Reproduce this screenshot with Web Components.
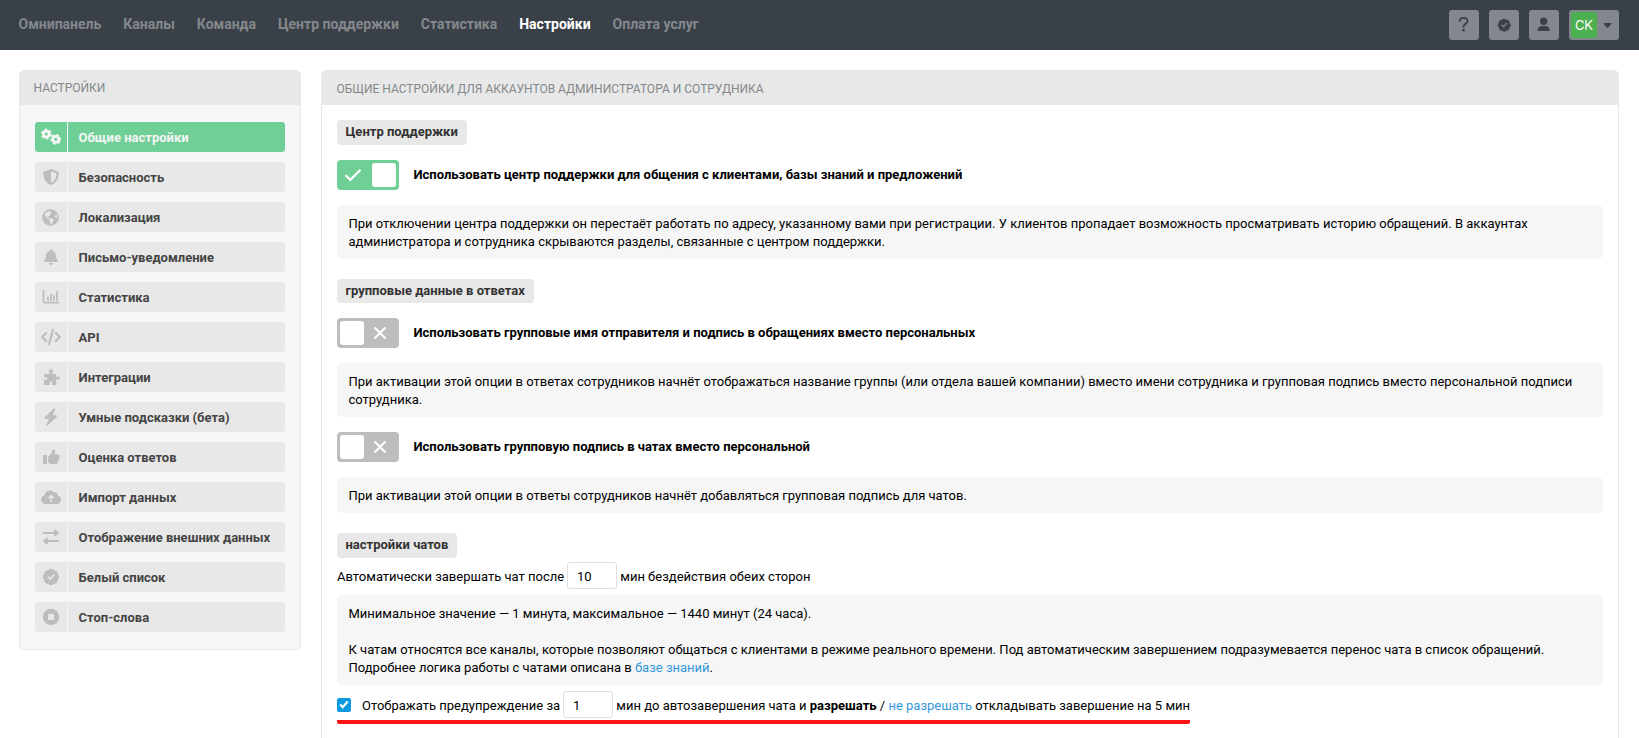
<!DOCTYPE html>
<html lang="ru">
<head>
<meta charset="utf-8">
<title>Настройки</title>
<style>
  body {
    margin: 0;
    height: 738px;
    overflow: hidden;
    background: #fff;
    color: #000;
    font: 13px/18px Roboto, "Liberation Sans", sans-serif;
  }
  main {
    display: grid;
    grid-template-columns: 282px 1298px;
    gap: 20px;
    align-items: start;
    padding: 20px 20px 0 19px;
  }
  .row {
    display: flex;
    align-items: center;
    white-space: pre;
  }
  .row > span { padding-top: 2px; margin-right: -0.3px; }
  .idle { height: 27px; margin: 4px 0 6px; }
  .warn { width: 853px; height: 27px; margin-top: 6px; padding-bottom: 2px; border-bottom: 4px solid #fe1313; border-radius: 0 0 2px 2px; }
  .gap { height: 20px; }
  a { color: #3498db; text-decoration: none; }
</style>
</head>
<body>

<app-header></app-header>

<main>
  <settings-panel class="side" heading="Настройки" tinted>
    <menu-item icon="cogs" active>Общие настройки</menu-item>
    <menu-item icon="shield">Безопасность</menu-item>
    <menu-item icon="globe">Локализация</menu-item>
    <menu-item icon="bell">Письмо-уведомление</menu-item>
    <menu-item icon="chart">Статистика</menu-item>
    <menu-item icon="code">API</menu-item>
    <menu-item icon="puzzle">Интеграции</menu-item>
    <menu-item icon="bolt">Умные подсказки (бета)</menu-item>
    <menu-item icon="thumb">Оценка ответов</menu-item>
    <menu-item icon="cloud">Импорт данных</menu-item>
    <menu-item icon="exchange">Отображение внешних данных</menu-item>
    <menu-item icon="badge">Белый список</menu-item>
    <menu-item icon="stop">Стоп-слова</menu-item>
  </settings-panel>

  <settings-panel heading="Общие настройки для аккаунтов администратора и сотрудника">
    <section-tag>Центр поддержки</section-tag>
    <toggle-row on>Использовать центр поддержки для общения с клиентами, базы знаний и предложений</toggle-row>
    <info-note>При отключении центра поддержки он перестаёт работать по адресу, указанному вами при регистрации. У клиентов пропадает возможность просматривать историю обращений. В аккаунтах администратора и сотрудника скрываются разделы, связанные с центром поддержки.</info-note>

    <div class="gap"></div>
    <section-tag style="height:24px">групповые данные в ответах</section-tag>
    <toggle-row>Использовать групповые имя отправителя и подпись в обращениях вместо персональных</toggle-row>
    <info-note>При активации этой опции в ответах сотрудников начнёт отображаться название группы (или отдела вашей компании) вместо имени сотрудника и групповая подпись вместо персональной подписи сотрудника.</info-note>
    <toggle-row>Использовать групповую подпись в чатах вместо персональной</toggle-row>
    <info-note>При активации этой опции в ответы сотрудников начнёт добавляться групповая подпись для чатов.</info-note>

    <div class="gap"></div>
    <section-tag>настройки чатов</section-tag>
    <div class="row idle"><span>Автоматически завершать чат после </span><number-box value="10"></number-box><span> мин бездействия обеих сторон</span></div>
    <info-note>Минимальное значение — 1 минута, максимальное — 1440 минут (24 часа).<br><br>К чатам относятся все каналы, которые позволяют общаться с клиентами в режиме реального времени. Под автоматическим завершением подразумевается перенос чата в список обращений. Подробнее логика работы с чатами описана в <a href="#">базе знаний</a>.</info-note>
    <div class="row warn"><check-box></check-box><span>Отображать предупреждение за </span><number-box value="1"></number-box><span> мин до автозавершения чата и <b>разрешать</b> / <a href="#">не разрешать</a> откладывать завершение на 5 мин</span></div>
  </settings-panel>
</main>

<script>
const gear = (x, y, turn) => `
  <g transform="translate(${x} ${y}) rotate(${turn})" fill="none" stroke="currentColor">
    <circle r="2.9" stroke-width="2.7"/>
    <circle r="4.5" stroke-width="1.8" stroke-dasharray="2.7 2.012"/>
  </g>`;

const badge = `<path fill-rule="evenodd" d="M9 .8a3 3 0 0 1 2.6 1.5 3 3 0 0 1 3.1.9 3 3 0 0 1 .9 3.1A3 3 0 0 1 17.2 9a3 3 0 0 1-1.6 2.7 3 3 0 0 1-.9 3.1 3 3 0 0 1-3.1.9A3 3 0 0 1 9 17.2a3 3 0 0 1-2.6-1.5 3 3 0 0 1-3.1-.9 3 3 0 0 1-.9-3.1A3 3 0 0 1 .8 9a3 3 0 0 1 1.6-2.7 3 3 0 0 1 .9-3.1 3 3 0 0 1 3.1-.9A3 3 0 0 1 9 .8zM12 5.8l-3.9 4-1.9-1.7-1 1.1 3 2.8 4.9-5.1z"/>`;

// [viewBox, width, height, markup]
const ICONS = {
  cogs: ["0 0 20 18", 20, 18, gear(5.3, 6, 0) + gear(14.8, 11.3, 30)],
  shield: ["0 0 18 18", 18, 18, `<path fill-rule="evenodd" d="M9 1l7 2.7c.5.2.8.7.8 1.2C16.8 10.500 14 15 9 17 4 15 1.200 10.500 1.200 4.900c0-.5.3-1 .8-1.200zM9 3.200v11.500c3.500-1.700 5.500-5.300 5.600-9.300z"/>`],
  globe: ["0 0 496 512", 17, 17, `<path d="M248 8C111.030 8 0 119.030 0 256s111.030 248 248 248 248-111.030 248-248S384.970 8 248 8zm82.290 357.600c-3.900 3.880-7.990 7.950-11.310 11.280-2.990 3-5.100 6.700-6.170 10.710-1.510 5.660-2.730 11.380-4.770 16.870l-17.390 46.850c-13.760 3-28 4.690-42.650 4.690v-27.380c1.690-12.620-7.640-36.260-22.630-51.250-6-6-9.370-14.140-9.370-22.630v-32.010c0-11.640-6.270-22.340-16.460-27.970-14.370-7.950-34.810-19.060-48.810-26.110-11.480-5.780-22.100-13.140-31.650-21.750l-.8-.72a114.792 114.792 0 0 1-18.060-20.740c-9.380-13.770-24.660-36.420-34.590-51.140 20.470-45.500 57.360-82.040 103.200-101.890l24.010 12.010C203.480 89.740 216 82.010 216 70.110v-11.300c7.990-1.290 16.120-2.110 24.390-2.420l28.300 28.300c6.250 6.250 6.250 16.380 0 22.630L264 112l-10.340 10.340c-3.120 3.120-3.120 8.190 0 11.310l4.690 4.690c3.120 3.120 3.120 8.190 0 11.310l-8 8a8.008 8.008 0 0 1-5.660 2.340h-8.990c-2.080 0-4.080.81-5.580 2.270l-9.920 9.650a8.008 8.008 0 0 0-1.580 9.310l15.590 31.190c2.660 5.320-1.210 11.580-7.150 11.580h-5.640c-1.930 0-3.790-.7-5.240-1.960l-9.280-8.060a16.017 16.017 0 0 0-15.550-3.100l-31.170 10.390a11.950 11.950 0 0 0-8.170 11.340c0 4.530 2.560 8.660 6.610 10.690l11.080 5.540c9.410 4.710 19.790 7.160 30.310 7.160s22.590 27.290 32 32h66.750c8.490 0 16.620 3.370 22.630 9.370l13.690 13.690a30.503 30.503 0 0 1 8.930 21.570 46.536 46.536 0 0 1-13.720 32.980zM417 274.250c-5.790-1.450-10.840-5-14.150-9.970l-17.980-26.970a23.970 23.970 0 0 1 0-26.620l19.590-29.380c2.320-3.470 5.500-6.290 9.240-8.150l12.980-6.490C440.200 193.590 448 223.870 448 256c0 8.670-.74 17.160-1.820 25.540L417 274.250z"/>`],
  bell: ["0 0 448 512", 14, 16, `<path d="M224 512c35.320 0 63.970-28.650 63.970-64H160.030c0 35.350 28.650 64 63.970 64zm215.390-149.710c-19.320-20.760-55.470-51.990-55.470-154.290 0-77.700-54.480-139.900-127.940-155.160V32c0-17.670-14.320-32-31.980-32s-31.980 14.330-31.980 32v20.840C118.560 68.100 64.080 130.300 64.080 208c0 102.300-36.150 133.530-55.470 154.290-6 6.450-8.660 14.160-8.610 21.710.11 16.400 12.980 32 32.100 32h383.800c19.120 0 32-15.600 32.100-32 .05-7.550-2.610-15.270-8.610-21.710z"/>`],
  chart: ["0 0 18 16", 18, 16, `<path d="M1.500 1.500v10.700a1.500 1.500 0 0 0 1.500 1.500h13.700M6 8.500v2.700M9 5.500v5.700M12 6.800v4.400M15 3v8.200" fill="none" stroke="currentColor" stroke-width="1.8" stroke-linecap="round"/>`],
  code: ["0 0 20 18", 20, 18, `<path d="M5.200 5L1.200 9l4 4M14.800 5l4 4-4 4M12 1.700L8 16.300" fill="none" stroke="currentColor" stroke-width="2.100" stroke-linecap="round" stroke-linejoin="round"/>`],
  puzzle: ["0 0 18 18", 18, 18, `<path d="M2 6h4.700c.7 0 1-.6.600-1.200C6.300 3 7 1.200 9 1.200s2.700 1.800 1.700 3.600c-.4.600 0 1.200.6 1.200H14.200v2.500c0 .7.6 1 1.100.6 1.300-1.100 2.500-.5 2.500 1.100s-1.200 2.200-2.500 1.100c-.5-.4-1.100-.1-1.100.6v5h-3.600c-.7 0-.9-.5-.5-1.100.8-1.200.4-2.400-1.100-2.400s-1.900 1.200-1.100 2.400c.4.600.2 1.100-.5 1.100H2v-4.600c0-.7.500-.9 1.100-.5 1.300.9 2.300.4 2.300-1s-1-1.900-2.300-1C2.500 9.200 2 9 2 8.300z"/>`],
  bolt: ["0 0 18 18", 18, 18, `<path d="M11.700 1L3.200 9.300c-.5.5-.2 1.300.4 1.300h4l-3 6c-.3.600.4 1 .9.500l9-8.400c.4-.5.2-1.300-.4-1.300h-4l2.600-5.900c.2-.6-.5-1-1-.5z" stroke="currentColor" stroke-width=".7"/>`],
  thumb: ["0 0 18 16", 18, 16, `<rect x="1" y="6" width="4" height="9" rx="1"/><path d="M6.300 7.200c2.600-1.100 3.300-3.500 3.800-5.500C10.400.5 11.300.3 12.200.7c1.400.6 1.300 2.700.2 4.800h3.300c1.900 0 2.400 2 1.200 2.900.7.900.4 1.900-.5 2.400.4 1-.1 1.900-1 2.200.2 1.300-.6 2-2 2h-3c-1.700 0-2.700-.7-4.100-1.600z"/>`],
  cloud: ["0 0 20 16", 20, 16, `<path fill-rule="evenodd" d="M16.700 6.500c.5-2.300-1.700-3.700-3.500-2.900C10.800.1 4.200 1.300 3.500 6.200.9 7.200-.2 9.300.3 11.500.8 13.700 2.500 15 4.600 15H16c5 0 5.400-7.500.7-8.500zM10 5.500l3.200 3.200-1 1-1.500-1.400v4.900H9.300V8.300L7.800 9.700l-1-1z"/>`],
  exchange: ["0 0 18 18", 18, 18, `<path d="M1.700 5h13M3.300 13h13" fill="none" stroke="currentColor" stroke-width="2" stroke-linecap="round"/><path d="M12.800 1.800L16.900 5l-4.100 3.200zM5.200 9.800L1.100 13l4.100 3.200z" stroke="currentColor" stroke-width="1" stroke-linejoin="round"/>`],
  badge: ["0 0 18 18", 18, 18, badge],
  stop: ["0 0 18 18", 18, 18, `<path fill-rule="evenodd" d="M9 .8a8.200 8.200 0 1 0 0 16.400A8.200 8.200 0 0 0 9 .8zM6.800 6h4.400c.5 0 .8.3.8.8v4.400c0 .5-.3.800-.8.800H6.800c-.5 0-.8-.3-.8-.8V6.800c0-.5.3-.8.8-.8z"/>`],
  user: ["0 0 14 16", 14, 16, `<circle cx="7" cy="4.400" r="3.900"/><path d="M.6 14.300C.6 11 2.700 9.400 5.100 9.400h3.800c2.400 0 4.500 1.600 4.500 4.900 0 .3-.2.500-.5.500H1.100c-.3 0-.5-.2-.5-.5z"/>`],
  help: ["0 0 14 18", 14, 18, `<path d="M2.800 5.200C3.100 2.900 4.600 2 6.800 2c2.400 0 4.200 1.200 4.200 3.300 0 3-4.100 2.900-4.100 6.100" fill="none" stroke="currentColor" stroke-width="2" stroke-linecap="round"/><circle cx="6.900" cy="15" r="1.400"/>`],
  caret: ["0 0 10 6", 9, 5, `<path d="M1 0h8c.8 0 1.100.8.600 1.300L5.700 5.500c-.4.400-1 .4-1.400 0L.4 1.300C-.1.800.200 0 1 0z"/>`],
  check: ["0 0 18 14", 18, 14, `<path d="M1.500 7.200l4.800 4.700L16.500 1.800" fill="none" stroke="currentColor" stroke-width="2.2"/>`],
  cross: ["0 0 14 14", 14, 14, `<path d="M1.500 1.500l11 11M12.500 1.500l-11 11" fill="none" stroke="currentColor" stroke-width="2.1"/>`],
};

const icon = (name, scale = 1) => {
  const [box, w, h, body] = ICONS[name];
  return `<svg viewBox="${box}" width="${w * scale}" height="${h * scale}" fill="currentColor">${body}</svg>`;
};

class BaseElement extends HTMLElement {
  connectedCallback() {
    if (this.shadowRoot) return;
    this.attachShadow({ mode: "open" }).innerHTML = this.render();
  }
}

class AppHeader extends BaseElement {
  render() {
    const links = ["Омнипанель", "Каналы", "Команда", "Центр поддержки", "Статистика", "Настройки", "Оплата услуг"];
    return `
      <style>
        :host {
          display: flex;
          justify-content: space-between;
          align-items: center;
          box-sizing: border-box;
          height: 50px;
          padding: 0 20px 0 18.5px;
          background: #3a4047;
        }
        nav {
          display: flex;
          gap: 22px;
          font-size: 14px;
          font-weight: 700;
          color: #84888c;
          padding-bottom: 2px;
        }
        .current { color: #fff; }
        .tools { display: flex; gap: 10px; }
        .tool {
          display: flex;
          align-items: center;
          justify-content: center;
          width: 30px;
          height: 30px;
          border-radius: 3px;
          background: #83888e;
          color: #3a4047;
        }
        .account {
          width: 48px;
          padding-left: 2px;
          justify-content: flex-start;
        }
        .avatar {
          width: 26px;
          margin-right: 6px;
          border-radius: 3px;
          background: #4caf50;
          color: #fff;
          font: 13px/26px Inter, sans-serif;
          text-align: center;
        }
      </style>
      <nav>${links.map(t => `<span class="${t === "Настройки" ? "current" : ""}">${t}</span>`).join("")}</nav>
      <div class="tools">
        <div class="tool">${icon("help", 0.95)}</div>
        <div class="tool">${icon("badge", 0.8)}</div>
        <div class="tool">${icon("user", 0.95)}</div>
        <div class="tool account"><span class="avatar">CK</span>${icon("caret")}</div>
      </div>
    `;
  }
}

class SettingsPanel extends BaseElement {
  render() {
    const tinted = this.hasAttribute("tinted");
    return `
      <style>
        :host {
          display: block;
          box-sizing: border-box;
          border: 1px solid #e8e8e8;
          border-radius: 5px;
          overflow: hidden;
          background: ${tinted ? "#f6f6f6" : "#fff"};
          height: ${tinted ? "580px" : "700px"};
        }
        header {
          box-sizing: border-box;
          height: 34px;
          padding: ${tinted ? "8px 13.5px 0" : "9px 14.5px 0"};
          background: #e8e8e8;
          color: #84888c;
          font-size: 12px;
          line-height: 18px;
          text-transform: uppercase;
        }
        .body {
          ${tinted ? "display: grid; gap: 10px; padding: 17px 15px;" : "padding: 15px;"}
        }
      </style>
      <header>${this.getAttribute("heading")}</header>
      <div class="body"><slot></slot></div>
    `;
  }
}

class MenuItem extends BaseElement {
  render() {
    const active = this.hasAttribute("active");
    return `
      <style>
        :host {
          display: grid;
          grid-template-columns: 32px 1fr;
          gap: 1px;
          height: 30px;
          border-radius: 3px;
          overflow: hidden;
          color: ${active ? "#f6f6f6" : "#444"};
          font-weight: 700;
        }
        span {
          display: flex;
          align-items: center;
          background: ${active ? "#70cf97" : "#e8e8e8"};
        }
        .icon {
          justify-content: center;
          box-sizing: border-box;
          padding-right: 1px;
          color: ${active ? "#f6f6f6" : "#bdbdbd"};
        }
        .label { padding: 1px 0 0 10.6px; }
      </style>
      <span class="icon">${icon(this.getAttribute("icon"))}</span>
      <span class="label"><slot></slot></span>
    `;
  }
}

class SectionTag extends BaseElement {
  render() {
    return `
      <style>
        :host {
          display: block;
          box-sizing: border-box;
          width: fit-content;
          height: 25px;
          padding: 3px 9px 0 8.5px;
          border-radius: 4px;
          background: #e8e8e8;
          color: #333;
          font-weight: 700;
        }
      </style>
      <slot></slot>
    `;
  }
}

class ToggleRow extends BaseElement {
  render() {
    const on = this.hasAttribute("on");
    return `
      <style>
        :host {
          display: flex;
          align-items: center;
          gap: 14.5px;
          margin: 15px 0;
          font-weight: 700;
        }
        .switch {
          display: flex;
          flex-direction: ${on ? "row" : "row-reverse"};
          align-items: center;
          box-sizing: border-box;
          width: 62px;
          height: 30px;
          padding: 3px;
          border-radius: 4px;
          background: ${on ? "#70cf97" : "#bdbdbd"};
          color: #fff;
        }
        .mark {
          display: flex;
          flex: 1;
          justify-content: center;
          padding-right: ${on ? "7px" : "0"};
        }
        .thumb {
          width: 24px;
          height: 24px;
          border-radius: 3px;
          background: #fff;
        }
      </style>
      <span class="switch"><span class="mark">${icon(on ? "check" : "cross")}</span><span class="thumb"></span></span>
      <span><slot></slot></span>
    `;
  }
}

class InfoNote extends BaseElement {
  render() {
    return `
      <style>
        :host {
          display: block;
          padding: 10px 12px 8px 11.5px;
          border-radius: 5px;
          background: #f6f6f6;
        }
      </style>
      <slot></slot>
    `;
  }
}

class NumberBox extends BaseElement {
  render() {
    return `
      <style>
        :host {
          display: block;
          box-sizing: border-box;
          width: 50px;
          height: 27px;
          padding: 0 9px;
          border: 1px solid #ddd;
          border-radius: 3px;
          background: #fff;
          line-height: 27px;
          white-space: normal;
        }
      </style>
      <span>${this.getAttribute("value")}</span>
    `;
  }
}

class CheckBox extends BaseElement {
  render() {
    return `
      <style>
        :host {
          display: flex;
          align-items: center;
          justify-content: center;
          width: 14px;
          height: 14px;
          margin-right: 11px;
          border-radius: 2px;
          background: #0d99e0;
        }
      </style>
      <svg width="10" height="9" viewBox="0 0 10 9"><path d="M1.200 4.600l2.500 2.600 5-5.700" fill="none" stroke="#fff" stroke-width="2.200"/></svg>
    `;
  }
}

customElements.define("app-header", AppHeader);
customElements.define("settings-panel", SettingsPanel);
customElements.define("menu-item", MenuItem);
customElements.define("section-tag", SectionTag);
customElements.define("toggle-row", ToggleRow);
customElements.define("info-note", InfoNote);
customElements.define("number-box", NumberBox);
customElements.define("check-box", CheckBox);
</script>
</body>
</html>
